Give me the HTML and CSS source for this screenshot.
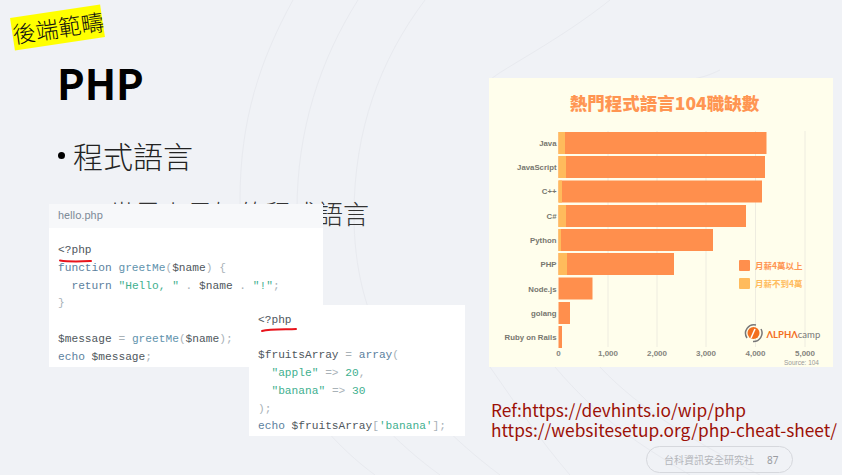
FILE: index.html
```html
<!DOCTYPE html>
<html lang="zh-Hant">
<head>
<meta charset="utf-8">
<title>PHP</title>
<link rel="stylesheet" href="styles.css">
</head>
<body>
<main class="slide">
  <svg class="arcs" width="842" height="475" viewBox="0 0 842 475" fill="none" stroke="#e8eaef" stroke-width="1">
    <path d="M293 0C260 60 240 120 240 200C240 320 300 420 375 475"/>
    <path d="M358 0C320 60 297 130 297 210C297 320 350 410 440 475"/>
    <path d="M425 0C380 60 354 130 354 215C354 320 400 400 500 475"/>
    <path d="M610 0C560 40 500 70 490 80"/>
    <path d="M720 70C700 80 690 78 685 82"/>
    <path d="M555 367C600 420 640 445 690 475"/>
    <path d="M600 367C640 410 700 445 760 475"/>
    <path d="M490 367C520 410 540 440 570 475"/>
  </svg>

  <div class="tag">後端範疇</div>
  <h1 class="title">PHP</h1>
  <p class="bullet"><span class="dot"></span>程式語言</p>
  <p class="sub">世界上最好的程式語言</p>

  <section class="code-card first">
    <div class="file">hello.php</div>
    <pre class="code"><span class="d">&lt;?php</span>
<span class="k">function</span> <span class="f">greetMe</span><span class="p">(</span><span class="d">$name</span><span class="p">) {</span>
  <span class="k">return</span> <span class="s">"Hello, "</span> <span class="p">.</span> <span class="d">$name</span> <span class="p">.</span> <span class="s">"!"</span><span class="p">;</span>
<span class="p">}</span>

<span class="d">$message</span> <span class="p">=</span> <span class="f">greetMe</span><span class="p">(</span><span class="d">$name</span><span class="p">);</span>
<span class="k">echo</span> <span class="d">$message</span><span class="p">;</span></pre>
  </section>

  <section class="code-card second">
    <pre class="code"><span class="d">&lt;?php</span>

<span class="d">$fruitsArray</span> <span class="p">=</span> <span class="k">array</span><span class="p">(</span>
  <span class="s">"apple"</span> <span class="p">=&gt;</span> <span class="s">20</span><span class="p">,</span>
  <span class="s">"banana"</span> <span class="p">=&gt;</span> <span class="s">30</span>
<span class="p">);</span>
<span class="k">echo</span> <span class="d">$fruitsArray</span><span class="p">[</span><span class="s">'banana'</span><span class="p">];</span></pre>
  </section>

  <svg class="marks" width="842" height="475" viewBox="0 0 842 475" fill="none" stroke="#e8141c" stroke-linecap="round">
    <path d="M60 260.500C70 262 80 261.500 91 261" stroke-width="2"/>
    <path d="M262 331C270 329 285 329.500 296 329" stroke-width="2"/>
  </svg>

  <figure class="chart">
    <svg width="344" height="289" viewBox="489 78 344 289">
      <text class="chart-title" x="664.500" y="109.500">熱門程式語言104職缺數</text>
      <g stroke="#eeece0" stroke-width="1">
        <path d="M608 131V347M657 131V347M706 131V347M755.500 131V347M805 131V347"/>
      </g>
      <g class="bars-main">
        <rect x="558.500" y="132" width="208" height="22"/>
        <rect x="558.500" y="156" width="206.500" height="22"/>
        <rect x="558.500" y="180.500" width="203.500" height="22"/>
        <rect x="558.500" y="205" width="187.500" height="22"/>
        <rect x="558.500" y="229" width="154.500" height="22"/>
        <rect x="558.500" y="253" width="115.500" height="22"/>
        <rect x="558.500" y="277.500" width="34" height="22"/>
        <rect x="558.500" y="302" width="11.500" height="22"/>
        <rect x="558.500" y="326" width="3.500" height="22"/>
      </g>
      <g class="bars-low">
        <rect x="558.500" y="132" width="6.500" height="22"/>
        <rect x="558.500" y="156" width="7.500" height="22"/>
        <rect x="558.500" y="180.500" width="3.500" height="22"/>
        <rect x="558.500" y="205" width="7.500" height="22"/>
        <rect x="558.500" y="229" width="2.500" height="22"/>
        <rect x="558.500" y="253" width="8.500" height="22"/>
      </g>
      <g class="cat">
        <text x="556.500" y="146">Java</text>
        <text x="556.500" y="170">JavaScript</text>
        <text x="556.500" y="194">C++</text>
        <text x="556.500" y="219">C#</text>
        <text x="556.500" y="243">Python</text>
        <text x="556.500" y="267">PHP</text>
        <text x="556.500" y="292">Node.js</text>
        <text x="556.500" y="316">golang</text>
        <text x="556.500" y="340">Ruby on Rails</text>
      </g>
      <g class="axis">
        <text x="558.500" y="356">0</text>
        <text x="608" y="356">1,000</text>
        <text x="657" y="356">2,000</text>
        <text x="706" y="356">3,000</text>
        <text x="755.500" y="356">4,000</text>
        <text x="805" y="356">5,000</text>
      </g>
      <text class="source" x="819" y="365">Source: 104</text>
      <rect x="739" y="260" width="11" height="11" rx="1" fill="#ff8f4d"/>
      <rect x="739" y="278" width="11" height="11" rx="1" fill="#ffbb5c"/>
      <text class="legend hi" x="755" y="269">月薪4萬以上</text>
      <text class="legend lo" x="755" y="287">月薪不到4萬</text>
      <g>
        <circle cx="753.500" cy="333" r="6" fill="#f36f1e"/>
        <path d="M747 338A8.500 8.500 0 0 1 756 325" fill="none" stroke="#777" stroke-width="1.500"/>
        <path d="M761 329A8.500 8.500 0 0 1 753 341.500" fill="none" stroke="#777" stroke-width="1.500"/>
        <path d="M751 338L755 329" stroke="#fff" stroke-width="1.500"/>
      </g>
      <text class="logo" x="766.500" y="337.500"><tspan class="logo-a">ΛLPHΛ</tspan>camp</text>
    </svg>
  </figure>

  <p class="refs">Ref:https://devhints.io/wip/php<br>https://websitesetup.org/php-cheat-sheet/</p>
  <div class="footer"><span>台科資訊安全研究社</span><span class="num">87</span></div>
</main>
</body>
</html>
```
FILE: styles.css
```css
* { box-sizing: border-box; }
html, body { margin: 0; padding: 0; }
body { width: 842px; height: 475px; overflow: hidden; }

.slide {
  position: relative;
  width: 842px;
  height: 475px;
  overflow: hidden;
  background: #f0f2f6;
  font-family: "Noto Sans CJK TC", "Noto Sans", sans-serif;
  color: #111;
}
.arcs, .marks { position: absolute; left: 0; top: 0; }
.marks { z-index: 3; }

.tag {
  position: absolute;
  left: 12px;
  top: 11px;
  width: 91px;
  height: 33px;
  background: #ffff00;
  transform: rotate(-8.500deg);
  font-size: 23px;
  line-height: 33px;
  color: #111;
  white-space: nowrap;
  text-align: center;
  font-weight: 300;
}
.title {
  position: absolute;
  left: 57px;
  top: 51px;
  margin: 0;
  font-size: 41.500px;
  line-height: 62px;
  font-weight: 700;
  color: #000;
}
.bullet {
  position: absolute;
  left: 58px;
  top: 132px;
  margin: 0;
  display: flex;
  align-items: center;
  font-size: 30px;
  line-height: 46px;
  font-weight: 300;
  color: #222;
  white-space: nowrap;
}
.dot {
  width: 7px;
  height: 7px;
  margin-right: 8px;
  border-radius: 50%;
  background: #000;
}
.sub {
  position: absolute;
  left: 109px;
  top: 193px;
  margin: 0;
  font-size: 26px;
  line-height: 40px;
  font-weight: 300;
  color: #333;
  white-space: nowrap;
}

.code-card { position: absolute; background: #fff; }
.code-card.first { left: 49px; top: 204px; width: 274px; height: 163px; }
.code-card.second { left: 249px; top: 305px; width: 216px; height: 131px; z-index: 2; padding: 7px 0 0 9px; }
.file {
  height: 24px;
  padding-left: 9px;
  background: #f7f8fa;
  color: #7f8c99;
  font: 11px/24px "Roboto", "Liberation Sans", sans-serif;
}
.first .code { padding: 14px 0 0 9px; line-height: 17.800px; }
.code {
  margin: 0;
  font: 11.200px/17.700px "Liberation Mono", monospace;
  color: #4d5a63;
}
.d { color: #4f575d; }
.k { color: #5c7f9e; }
.f { color: #5f93ad; }
.s { color: #3fb08f; }
.p { color: #a9b2b8; }

.chart { position: absolute; left: 489px; top: 78px; margin: 0; width: 344px; height: 289px; background: #fffeec; }
.chart svg { display: block; }
.chart-title { font: 900 17.500px "Noto Sans CJK TC", sans-serif; fill: #ff9552; text-anchor: middle; }
.bars-main rect { fill: #ff8f4d; }
.bars-low rect { fill: #ffbb5c; }
.cat text { font: 700 7.800px "Liberation Sans", sans-serif; fill: #77776f; text-anchor: end; }
.axis text { font: 700 8px "Liberation Sans", sans-serif; fill: #85857e; text-anchor: middle; }
.source { font: 6.500px "Liberation Sans", sans-serif; fill: #999; text-anchor: end; }
.legend { font: 700 8.500px "Noto Sans CJK TC", sans-serif; }
.legend.hi { fill: #ff9552; }
.legend.lo { fill: #ffbb5c; }
.logo { font: 400 9.500px "Lato", sans-serif; fill: #777; }
.logo-a { font-weight: 700; fill: #f36f1e; }

.refs {
  position: absolute;
  left: 491px;
  top: 400px;
  margin: 0;
  font-size: 17.300px;
  line-height: 20px;
  color: #9c1006;
  white-space: nowrap;
}
.footer {
  position: absolute;
  left: 646px;
  top: 446px;
  width: 147px;
  height: 27px;
  border: 1px solid #d6d8dd;
  border-radius: 14px;
  display: flex;
  align-items: center;
  padding-left: 17px;
  gap: 13px;
  font-size: 10px;
  color: #b4b6bb;
  white-space: nowrap;
}
.num { color: #9a9ca1; font-family: "Noto Sans", sans-serif; }
```
